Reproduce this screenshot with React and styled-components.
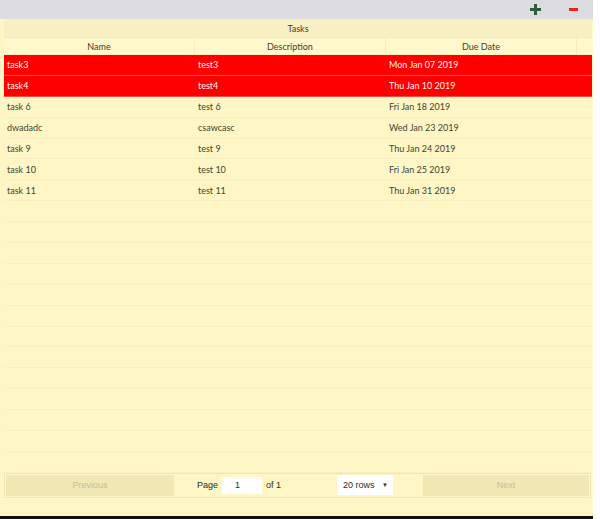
import styled, { createGlobalStyle } from "styled-components";

const GlobalStyle = createGlobalStyle`
  html, body {
    margin: 0;
    padding: 0;
    background: #ffffff;
  }
  body {
    font-family: Lato, "Liberation Sans", sans-serif;
  }
`;

const tasks = [
  { name: "task3", description: "test3", due: "Mon Jan 07 2019", overdue: true },
  { name: "task4", description: "test4", due: "Thu Jan 10 2019", overdue: true },
  { name: "task 6", description: "test 6", due: "Fri Jan 18 2019" },
  { name: "dwadadc", description: "csawcasc", due: "Wed Jan 23 2019" },
  { name: "task 9", description: "test 9", due: "Thu Jan 24 2019" },
  { name: "task 10", description: "test 10", due: "Fri Jan 25 2019" },
  { name: "task 11", description: "test 11", due: "Thu Jan 31 2019" },
];

const PAGE_SIZE = 20;

const Page = styled.div`
  width: 593px;
  height: 516px;
  background: #fef7c5;
  display: flex;
  flex-direction: column;
  border-bottom: 3px solid #111;
  box-sizing: content-box;
`;

const Toolbar = styled.div`
  height: 19px;
  flex-shrink: 0;
  background: #dcdbe0;
  display: flex;
  justify-content: flex-end;
  align-items: center;
  gap: 26px;
  padding-right: 14px;
`;

const ToolButton = styled.button`
  border: none;
  background: transparent;
  padding: 0;
  width: 12px;
  height: 12px;
  display: flex;
  align-items: center;
  justify-content: center;
  cursor: pointer;
`;

const Table = styled.div`
  display: flex;
  flex-direction: column;
  padding: 0 1px 0 4px;
`;

const GroupHeader = styled.div`
  height: 18px;
  background: #f8efc2;
  border-bottom: 1px solid #f3eab8;
  display: flex;
  align-items: center;
  justify-content: center;
  font-size: 9px;
  color: #3f3c30;
`;

const Columns = `
  display: grid;
  grid-template-columns: 191px 191px 191px 1fr;
`;

const HeaderRow = styled.div`
  ${Columns}
  height: 16px;
  background: #fef8cc;
  border-bottom: 1px solid #f6eebd;
`;

const HeaderCell = styled.div`
  display: flex;
  align-items: center;
  justify-content: center;
  font-size: 9px;
  color: #3f3c30;
  border-right: 1px solid #f5edc0;
  &:last-child {
    border-right: none;
  }
`;

const Row = styled.div`
  ${Columns}
  height: 20.9px;
  box-sizing: border-box;
  background: ${(p) => (p.$overdue ? "#ff0000" : "transparent")};
  border-bottom: 1px solid ${(p) => (p.$overdue ? "#ff4a3e" : "#f8f0c3")};
`;

const Cell = styled.div`
  display: flex;
  align-items: center;
  padding-left: 3px;
  font-size: 9px;
  color: ${(p) => (p.$overdue ? "#fff6f0" : "#433f33")};
`;

const Pagination = styled.div`
  margin: 0 1px 0 0;
  height: 25px;
  box-sizing: border-box;
  border: 1px solid #f0e7b6;
  display: grid;
  grid-template-columns: 168px 1fr 166px;
  align-items: stretch;
  padding: 1px;
`;

const NavButton = styled.button`
  border: none;
  background: #f1e8b3;
  color: #c6bd95;
  font-family: "Liberation Sans", sans-serif;
  font-size: 9px;
  cursor: default;
`;

const Center = styled.div`
  display: flex;
  align-items: center;
  justify-content: space-between;
  padding: 0 30px 0 23px;
  font-family: "Liberation Sans", sans-serif;
  font-size: 9px;
  color: #2f2c24;
`;

const PageInfo = styled.div`
  display: flex;
  align-items: center;
  gap: 4px;
`;

const PageInput = styled.div`
  width: 40px;
  height: 17px;
  background: #ffffff;
  display: flex;
  align-items: center;
  padding-left: 13px;
  box-sizing: border-box;
`;

const RowsSelect = styled.div`
  width: 56px;
  height: 20px;
  background: #ffffff;
  display: flex;
  align-items: center;
  justify-content: space-between;
  padding: 0 5px 0 6px;
  box-sizing: border-box;
  font-size: 9px;
`;

const Caret = styled.span`
  font-size: 6px;
`;

const Plus = () => (
  <svg width="11" height="11" viewBox="0 0 11 11">
    <rect x="4" y="0" width="3" height="11" fill="#2f5a3c" />
    <rect x="0" y="4" width="11" height="3" fill="#2f5a3c" />
  </svg>
);

const Minus = () => (
  <svg width="9" height="11" viewBox="0 0 9 11">
    <rect x="0" y="4" width="9" height="3" fill="#e8231e" />
  </svg>
);

const App = () => {
  const empty = PAGE_SIZE - tasks.length;
  return (
    <>
      <GlobalStyle />
      <Page>
        <Toolbar>
          <ToolButton aria-label="add">
            <Plus />
          </ToolButton>
          <ToolButton aria-label="remove">
            <Minus />
          </ToolButton>
        </Toolbar>
        <Table>
          <GroupHeader>Tasks</GroupHeader>
          <HeaderRow>
            <HeaderCell>Name</HeaderCell>
            <HeaderCell>Description</HeaderCell>
            <HeaderCell>Due Date</HeaderCell>
            <HeaderCell />
          </HeaderRow>
          {tasks.map((t) => (
            <Row key={t.name} $overdue={t.overdue}>
              <Cell $overdue={t.overdue}>{t.name}</Cell>
              <Cell $overdue={t.overdue}>{t.description}</Cell>
              <Cell $overdue={t.overdue}>{t.due}</Cell>
              <Cell />
            </Row>
          ))}
          {Array.from({ length: empty }).map((_, i) => (
            <Row key={"e" + i}>
              <Cell />
              <Cell />
              <Cell />
              <Cell />
            </Row>
          ))}
          <Pagination>
            <NavButton>Previous</NavButton>
            <Center>
              <PageInfo>
                Page <PageInput>1</PageInput> of 1
              </PageInfo>
              <RowsSelect>
                20 rows <Caret>▼</Caret>
              </RowsSelect>
            </Center>
            <NavButton>Next</NavButton>
          </Pagination>
        </Table>
      </Page>
    </>
  );
};

export default App;
